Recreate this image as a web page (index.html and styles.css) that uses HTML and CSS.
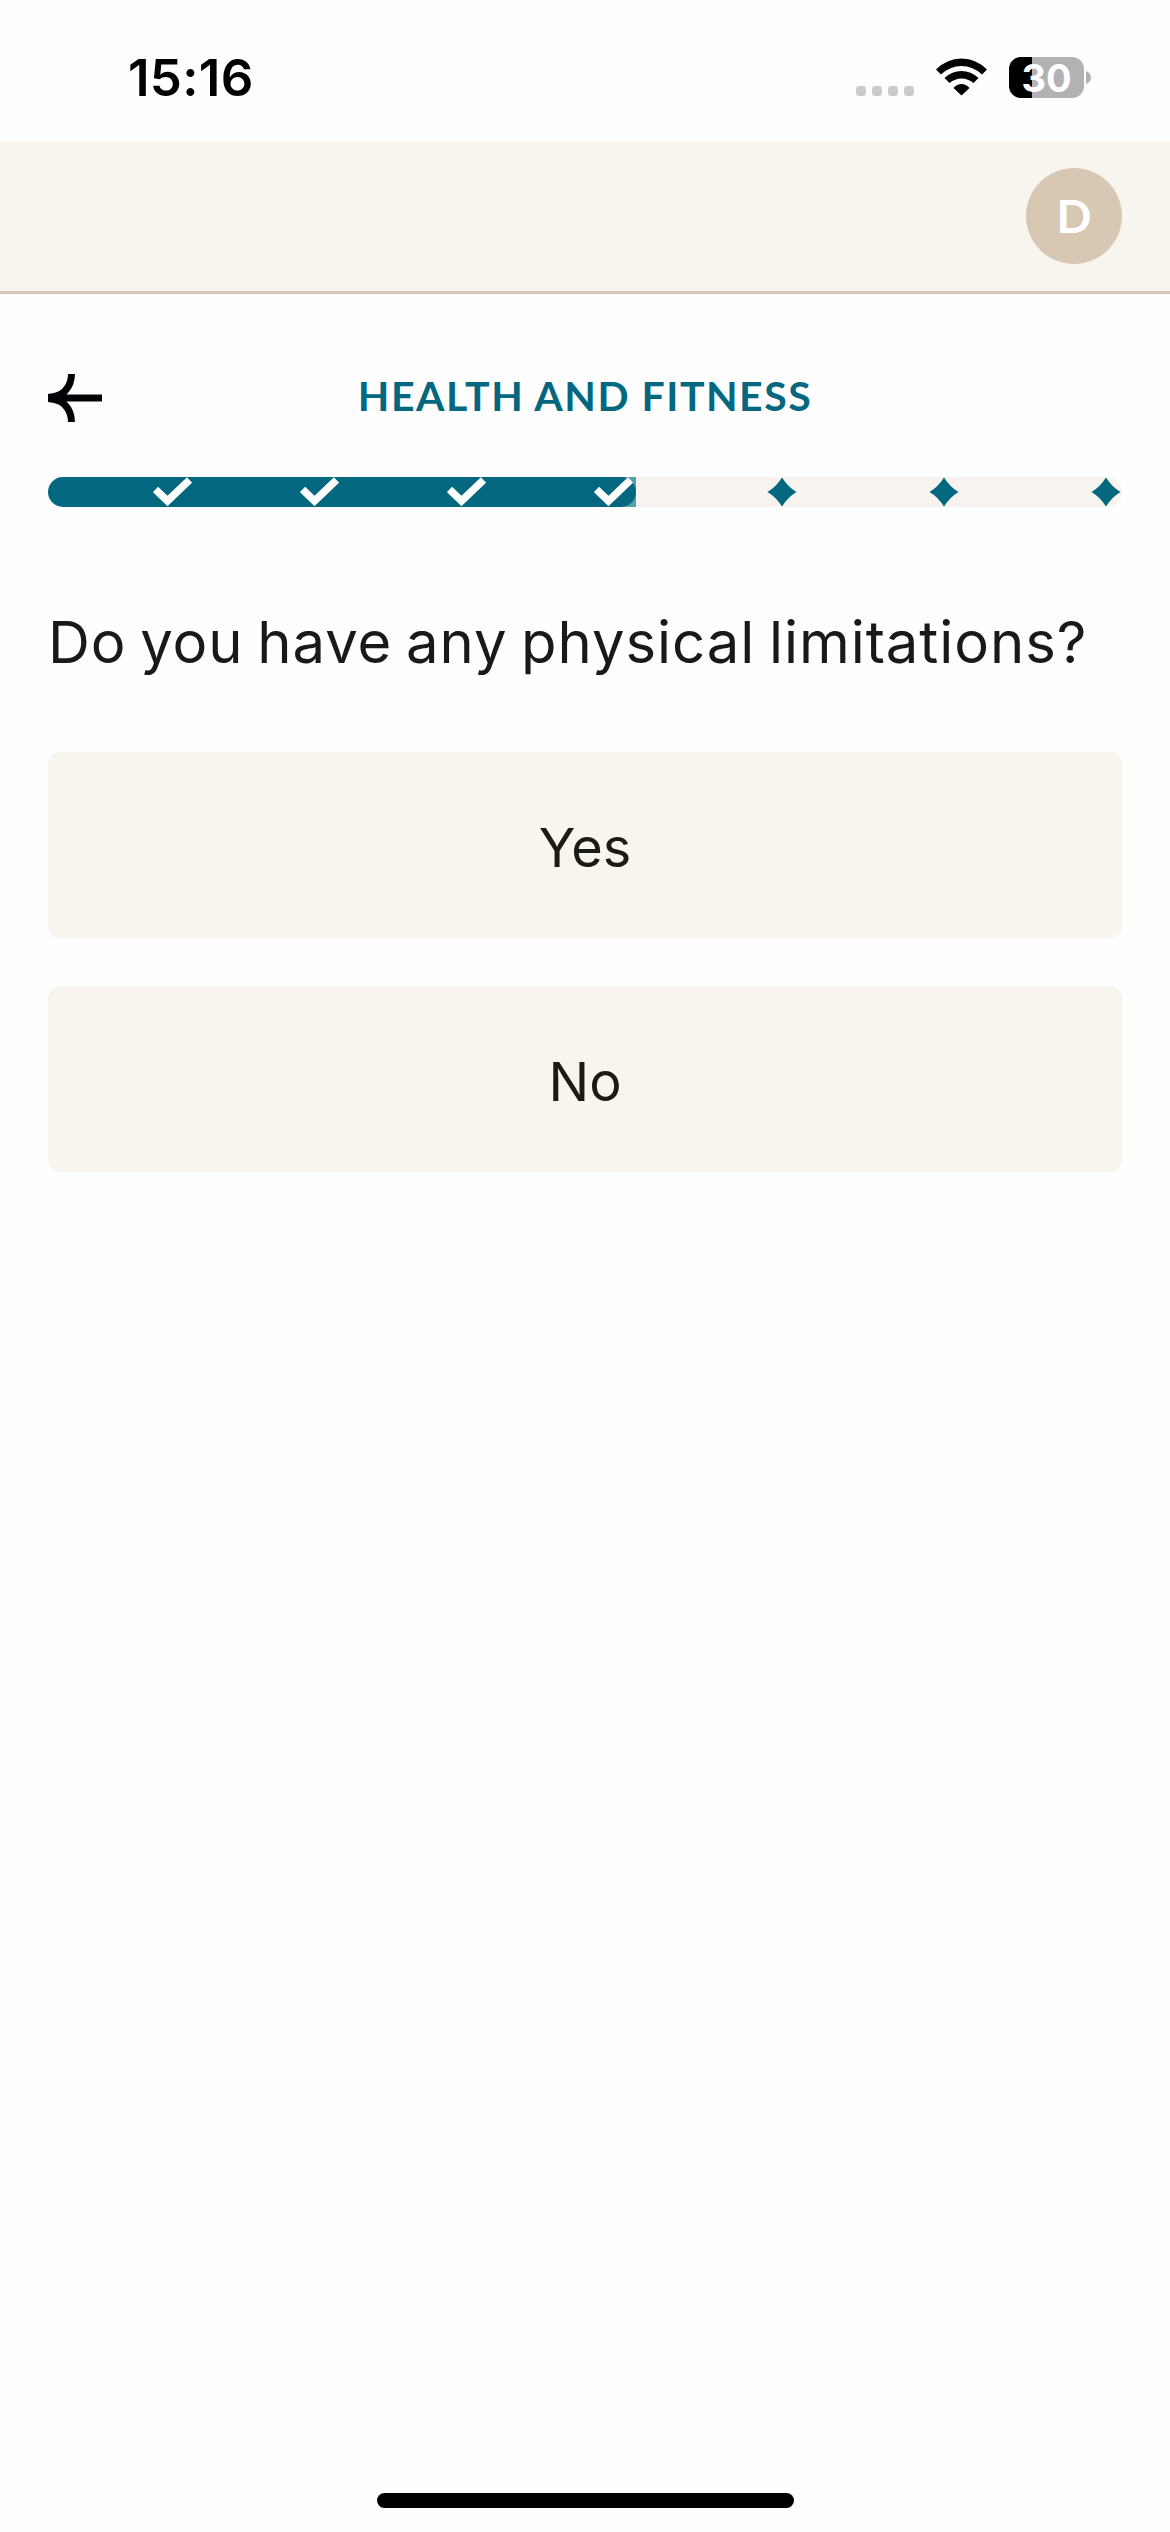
FILE: index.html
```html
<!DOCTYPE html>
<html lang="en">
<head>
<meta charset="utf-8">
<title>Health and Fitness</title>
<link rel="stylesheet" href="styles.css">
</head>
<body>
<div class="status">
  <span class="time">15:16</span>
  <div class="indicators">
    <div class="signal"><i></i><i></i><i></i><i></i></div>
    <svg class="wifi" width="51" height="38" viewBox="0 0 51 38">
      <path d="M0 11.500Q11 .5 25.500 .5T51 11.500L46 16.500Q37 8 25.500 8T5 16.500Z"/>
      <path d="M8.500 20Q16 13 25.500 13T42.500 20L37.500 25Q32 20.500 25.500 20.500T13.500 25Z"/>
      <path d="M17.500 30Q21 26 25.500 26T33.500 30L25.500 37.500Z"/>
    </svg>
    <div class="battery"><span class="level">30</span><svg width="5" height="13" viewBox="0 0 5 13"><path d="M0 0Q5 2 5 6.500T0 13Z"/></svg></div>
  </div>
</div>
<header class="header"><div class="avatar">D</div></header>
<main class="content">
  <div class="titlebar">
    <svg class="back" width="54" height="48" viewBox="0 0 54 48">
      <path d="M54 24H8M23.500 0Q23.500 10 17 17T0 24Q10.500 24 17 31T23.500 48"/>
      <path class="tip" d="M0 20Q10 19 17 14V34Q10 29 0 28Z"/>
    </svg>
    <h1>HEALTH AND FITNESS</h1>
  </div>
  <div class="progress">
    <div class="step done"><svg class="check" width="39" height="29" viewBox="0 0 39 29"><path d="M2.500 12.500L14.500 24L36.500 3"/></svg></div>
    <div class="step done"><svg class="check" width="39" height="29" viewBox="0 0 39 29"><path d="M2.500 12.500L14.500 24L36.500 3"/></svg></div>
    <div class="step done"><svg class="check" width="39" height="29" viewBox="0 0 39 29"><path d="M2.500 12.500L14.500 24L36.500 3"/></svg></div>
    <div class="step current"><div class="step done"><svg class="check" width="39" height="29" viewBox="0 0 39 29"><path d="M2.500 12.500L14.500 24L36.500 3"/></svg></div></div>
    <div class="step todo"><svg width="30" height="30" viewBox="0 0 30 30"><path d="M15 .5Q21 10 29.500 15Q21 20 15 29.500Q9 20 .5 15Q9 10 15 .5Z"/></svg></div>
    <div class="step todo"><svg width="30" height="30" viewBox="0 0 30 30"><path d="M15 .5Q21 10 29.500 15Q21 20 15 29.500Q9 20 .5 15Q9 10 15 .5Z"/></svg></div>
    <div class="step todo"><svg width="30" height="30" viewBox="0 0 30 30"><path d="M15 .5Q21 10 29.500 15Q21 20 15 29.500Q9 20 .5 15Q9 10 15 .5Z"/></svg></div>
  </div>
  <h2>Do you have any physical limitations?</h2>
  <div class="options">
    <button>Yes</button>
    <button>No</button>
  </div>
</main>
<div class="home"></div>
</body>
</html>
```

FILE: styles.css
```css
* { box-sizing: border-box; }
body {
  margin: 0;
  width: 1170px;
  height: 2532px;
  display: flex;
  flex-direction: column;
  background: #fefefe;
  font-family: Inter, "Liberation Sans", sans-serif;
  color: #19181a;
}
svg { display: block; flex: none; }
.status {
  height: 141px;
  display: flex;
  justify-content: space-between;
  padding: 0 79px 0 128px;
}
.time {
  font-size: 51px;
  font-weight: 600;
  line-height: 60px;
  letter-spacing: .3px;
  padding-top: 48px;
  color: #000;
}
.indicators { display: flex; padding-top: 57px; }
.signal { display: flex; gap: 6px; padding-top: 29px; margin-right: 22px; }
.signal i { width: 10px; height: 10px; border-radius: 3.500px; background: #cacaca; }
.wifi { margin: 1px 22px 0 0; }
.battery { display: flex; height: 41px; align-items: center; gap: 2px; }
.battery svg { fill: #b3b1b4; }
.level {
  width: 75px;
  height: 41px;
  border-radius: 12px;
  background: linear-gradient(90deg, #000 23px, #b3b1b4 23px);
  color: #fff;
  font-size: 38px;
  font-weight: 650;
  line-height: 42px;
  text-align: center;
}
.header {
  height: 153px;
  background: #f8f5ee;
  border-bottom: 3px solid #d5c8b9;
  display: flex;
  justify-content: flex-end;
  padding: 27px 48px 0;
}
.avatar {
  width: 96px;
  height: 96px;
  border-radius: 50%;
  background: #d6c8b3;
  color: #fff;
  font: 700 46px/95px Lato, sans-serif;
  text-align: center;
}
.content { padding: 80px 48px 0; }
.titlebar { display: grid; grid-template-columns: 54px 1fr 54px; align-items: center; height: 48px; }
.back { fill: none; stroke: #040206; stroke-width: 7; }
.back .tip { fill: #040206; stroke: none; }
h1 {
  margin: 0;
  color: #03687f;
  font: 700 41px/44px Lato, sans-serif;
  letter-spacing: 1.500px;
  text-align: center;
  white-space: nowrap;
  padding-bottom: 4px;
}
.progress {
  display: grid;
  grid-template-columns: repeat(4, 147px) repeat(3, 162px);
  height: 30px;
  margin-top: 55px;
  border-radius: 15px;
  overflow: hidden;
}
.step { display: flex; justify-content: flex-end; height: 30px; }
.done { background: #03687f; padding-right: 3px; }
.check { fill: none; stroke: #fff; stroke-width: 7.500; }
.current { background: #55a0a8; }
.current .done { flex: 1; border-radius: 0 15px 15px 0; }
.todo { background: #f7f4ef; padding-right: 1px; }
.todo svg { fill: #03687f; }
h2 {
  margin: 97px 0 0;
  font-size: 58px;
  font-weight: 400;
  line-height: 76px;
  letter-spacing: .95px;
  word-spacing: -3.600px;
  white-space: nowrap;
}
.options { display: grid; gap: 48px; margin-top: 72px; }
button {
  height: 186px;
  padding: 6px 0 0;
  border: 0;
  border-radius: 12px;
  background: #f8f5ee;
  color: #1c1a14;
  font: 400 54px/64px Inter, "Liberation Sans", sans-serif;
}
.home { width: 417px; height: 15px; margin: auto auto 24px; border-radius: 8px; background: #000; }
```
